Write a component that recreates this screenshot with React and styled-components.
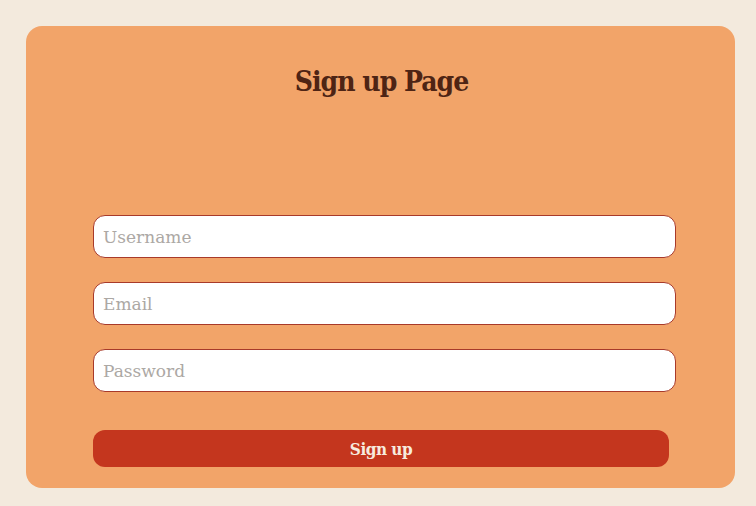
import React from "react";
import styled, { createGlobalStyle } from "styled-components";

const GlobalStyle = createGlobalStyle`
  html, body {
    margin: 0;
    padding: 0;
    background-color: #f3eadd;
    font-family: "DejaVu Serif", "Liberation Serif", serif;
  }
`;

const Page = styled.div`
  padding: 26px 21px 18px 26px;
`;

const SCard = styled.div`
  width: 709px;
  height: 462px;
  box-sizing: border-box;
  background-color: #f2a469;
  border-radius: 16px;
  padding: 38px 59px 0 67px;
  display: flex;
  flex-direction: column;
`;

const STitle = styled.h1`
  margin: 0 0 0 -6px;
  height: 40px;
  text-align: center;
  font-size: 28px;
  font-weight: bold;
  color: #4e2414;
  letter-spacing: -1px;
  line-height: 36px;
  font-stretch: condensed;
`;

const SForm = styled.form`
  margin-top: 111px;
  display: flex;
  flex-direction: column;
  gap: 24px;
`;

const SInput = styled.input`
  width: 100%;
  height: 43px;
  box-sizing: border-box;
  border: 1px solid #a83a2a;
  border-radius: 12px;
  background: #ffffff;
  padding: 0 9px;
  font-family: inherit;
  font-size: 17px;
  color: #333;
  outline: none;
  &::placeholder {
    color: #aca8a4;
  }
`;

const SButton = styled.button`
  margin-top: 14px;
  width: 576px;
  height: 37px;
  border: none;
  border-radius: 12px;
  background-color: #c4361e;
  color: #f7ebdf;
  font-family: inherit;
  font-size: 17px;
  font-weight: bold;
  font-stretch: condensed;
  letter-spacing: -0.5px;
  cursor: pointer;
`;

export default function App() {
  return (
    <>
      <GlobalStyle />
      <Page>
        <SCard>
          <STitle>Sign up Page</STitle>
          <SForm onSubmit={(e) => e.preventDefault()}>
            <SInput type="text" placeholder="Username" />
            <SInput type="email" placeholder="Email" />
            <SInput type="password" placeholder="Password" />
            <SButton type="submit">Sign up</SButton>
          </SForm>
        </SCard>
      </Page>
    </>
  );
}
